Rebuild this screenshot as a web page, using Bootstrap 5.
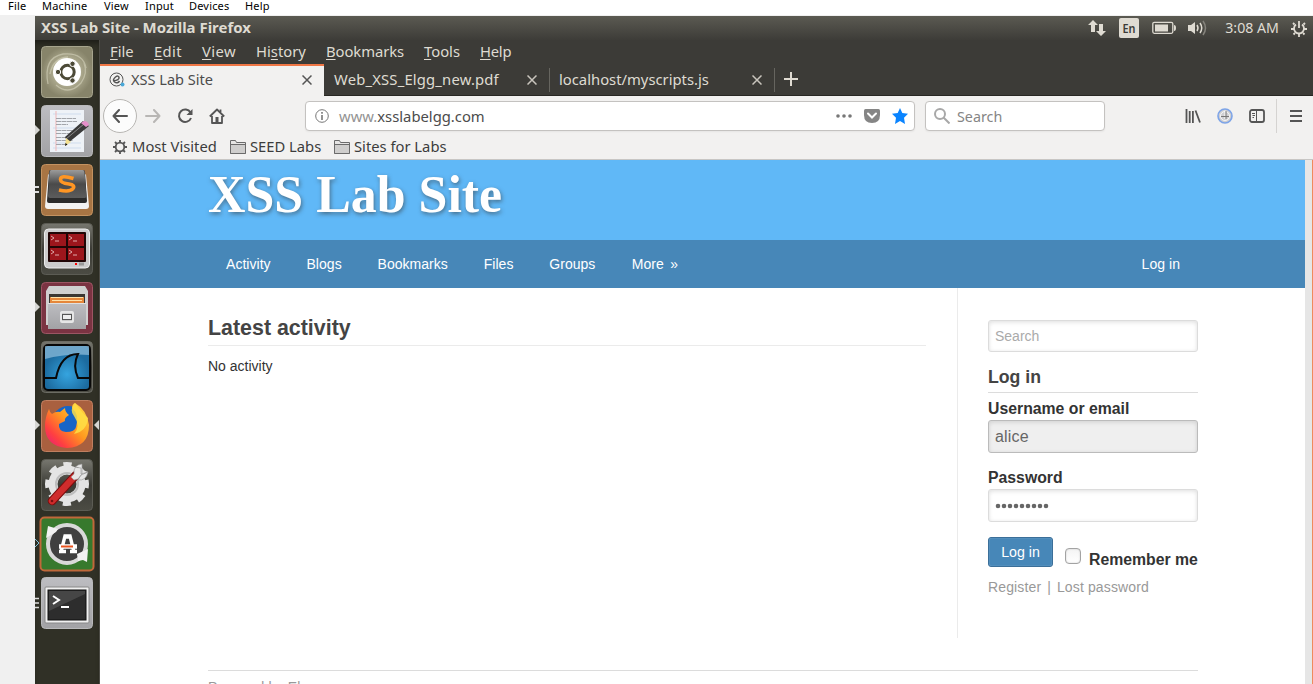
<!DOCTYPE html>
<html lang="en">
<head>
<meta charset="utf-8">
<title>XSS Lab Site</title>
<meta name="viewport" content="width=device-width, initial-scale=1">
<link href="https://cdn.jsdelivr.net/npm/bootstrap@5.3.0/dist/css/bootstrap.min.css" rel="stylesheet">
<style>
  body { width: 1313px; height: 684px; overflow: hidden; background: #fff; font-family: "Liberation Sans", Arial, sans-serif; font-size: 14px; color: #333; }
  svg { display: block; flex: none; }
  .hostbar { height: 15px; padding-left: 8px; font: 11px/12px "Noto Sans", sans-serif; color: #000; white-space: pre; letter-spacing: .18px; }
  .hostbar span { display: block; flex: none; }
  .gutter { width: 35px; background: #f0f0f0; flex: none; }
  .desk { height: 669px; border-top: 1px solid #f0f0f0; }
  .ubu { font-family: "Noto Sans", "Open Sans", sans-serif; white-space: nowrap; }
  .panel { height: 24px; background: linear-gradient(#5b5a52, #3d3c38); color: #dfdbd2; padding: 0 6px 0 6px; }
  .wtitle { font-size: 14.95px; line-height: 20px; padding-bottom: 2px; }
  .clock { font-size: 14.2px; margin-left: 17px; padding-bottom: 1px; }
  .launcher { width: 65px; background: #303026; border-right: 1px solid #4c4b45; padding: 6px 6px 0; gap: 7px; flex: none; box-shadow: inset 0 5px 5px -2px #1e1e18; }
  .tile { width: 52px; height: 52px; position: relative; flex: none; }
  .tile > .mk { position: absolute; left: -6px; top: 20px; }
  .tile > .mkr { position: absolute; left: 53px; top: 20px; }
  .menus { height: 24px; background: #3c3b37; color: #dfdbd2; padding: 0 10px; gap: 20px; font-size: 14.8px; line-height: 22px; }
  .menus span { flex: none; }
  .menus span:nth-child(1) { width: 24px; }
  .menus span:nth-child(2) { width: 28px; letter-spacing: .35px; }
  .menus span:nth-child(3) { width: 34px; letter-spacing: .4px; }
  .menus span:nth-child(4) { width: 50px; }
  .menus span:nth-child(5) { width: 78px; letter-spacing: -.06px; }
  .menus span:nth-child(6) { width: 36px; }
  .menus span:nth-child(7) { width: 31px; letter-spacing: -.25px; }
  .menus u { text-underline-offset: 2px; }
  .tabs { height: 32px; background: #3c3b37; color: #dfdbd2; font-size: 14.8px; line-height: 20px; border-bottom: 1px solid #282723; }
  .tabs .on { width: 224px; height: 32px; background: #f2f1f0; border-top: 2px solid #f07746; color: #4c4c4c; padding: 0 12px 0 9px; flex: none; font-size: 14.55px; }
  .tabs .on > * { margin-top: -3px; }
  .tabs .on > span { margin-top: -5px; }
  .tabs .off { width: 225px; height: 31px; padding: 0 12px 0 10px; flex: none; }
  .tabs .off > span { margin-top: -2px; }
  .tabs .sep { width: 1px; height: 24px; background: #66655f; flex: none; margin-left: -1px; }
  .tabs .sep + .off { margin-right: 1px; }
  .pdf { letter-spacing: .18px; }
  .tools { height: 40px; background: #f2f1f0; padding-left: 3px; color: #4c4c4c; }
  .back { width: 34px; height: 34px; border: 1px solid #b8b6b3; border-radius: 50%; background: #fcfcfc; flex: none; }
  .field { height: 30px; background: #fff; border: 1px solid #c4c2c0; border-radius: 4px; box-shadow: 0 1px 2px #0000000d; flex: none; font-size: 14.8px; }
  .marks { height: 23px; background: #f2f1f0; color: #3c3c3c; font-size: 14.75px; line-height: 20px; padding: 0 0 2px 12px; }
  .marks > span { margin-top: -2px; }
  .view { height: 525px; overflow: hidden; border-top: 1px solid #c8c6c4; background: #fff; }
  .page { width: 1205px; }
  .track { width: 7px; background: #e6e6e6; flex: none; }
  .edge { width: 1px; background: #f08a5d; flex: none; }
  .banner { height: 80px; background: #60b8f7; padding-left: 108px; }
  .banner h1 { font: bold 51.9px/70px "Liberation Serif", serif; color: #fff; text-shadow: 1px 2px 4px #33333390; margin: 0; white-space: nowrap; }
  .menubar { height: 48px; background: #4787b8; color: #fff; padding: 0 125px 0 126px; gap: 35.8px; line-height: 48px; white-space: nowrap; letter-spacing: .04px; }
  .wrap { width: 990px; margin-left: 108px; height: 350px; }
  .mainc { width: 750px; border-right: 1px solid #ebebeb; padding: 25px 31px 0 0; height: 350px; }
  .mainc .box { border-bottom: 1px solid #ebebeb; height: 33px; padding-top: 1px; }
  .mainc h2 { font-size: 21.4px; line-height: 28px; font-weight: 700; color: #444; margin: 0; }
  .side { width: 240px; padding: 32px 0 0 30px; white-space: nowrap; }
  .inp { border: 1px solid #dcdcdc; border-radius: 3px; box-shadow: inset 0 2px 4px rgba(0,0,0,.08), inset 0 0 4px rgba(0,0,0,.06); padding-left: 6px; width: 210px; }
  .finder { height: 32px; line-height: 30px; color: #aaa; }
  .userbox { margin-top: 2px; height: 33px; line-height: 31px; font-size: 16px; letter-spacing: .2px; color: #666; background: #efefef; border-color: #bbb; }
  .side h3 { font-size: 17.7px; line-height: 22px; font-weight: 700; color: #444; margin: 14px 0 0; height: 27px; border-bottom: 1px solid #dcdcdc; }
  .side label { font-weight: 700; font-size: 15.8px; line-height: 20px; height: 19px; display: block; }
  .go { width: 65px; height: 30px; background: #4787b8; border: 1px solid #3b6f99; border-radius: 3px; color: #fff; line-height: 28px; text-align: center; box-shadow: inset 0 0 1px #ffffffa0; padding: 0; font-size: 14.2px; flex: none; }
  .ck { width: 16px; height: 16px; border: 1px solid #a3a3a3; border-radius: 4px; background: linear-gradient(#f4f4f4, #fff); flex: none; box-shadow: inset 0 0 2px #0003; margin: 11px 0 0 12px; }
  .links { margin-top: 10px; color: #999; letter-spacing: .13px; }
  .foot { width: 990px; margin: 32px 0 0 108px; border-top: 1px solid #dcdcdc; color: #999; padding-top: 7px; line-height: 18px; letter-spacing: .18px; }
</style>
<script src="https://cdn.jsdelivr.net/npm/bootstrap@5.3.0/dist/js/bootstrap.bundle.min.js"></script>
</head>
<body>
<div class="hostbar d-flex"><span style="width:34px">File</span><span style="width:62px">Machine</span><span style="width:41px">View</span><span style="width:44px">Input</span><span style="width:56px">Devices</span><span>Help</span></div>
<div class="desk d-flex">
  <div class="gutter"></div>
  <div class="flex-grow-1">
    <header class="panel ubu d-flex align-items-center">
      <strong class="wtitle me-auto">XSS Lab Site - Mozilla Firefox</strong>
      <svg width="18" height="18" viewBox="0 0 18 18" fill="#dfdbd2"><path d="M0 6 5 1l5 5H7v7H3V6zM8 12h3V5h4v7h3l-5 5z"/></svg>
      <svg style="margin-left:13px" width="20" height="20"><rect width="20" height="20" rx="2" fill="#dfdbd2"/><text x="3.500" y="14.500" font-size="12" font-weight="600" fill="#3c3b37" textLength="13" lengthAdjust="spacingAndGlyphs">En</text></svg>
      <svg style="margin-left:13px" width="24" height="14"><rect x=".8" y="1.300" width="20" height="11" rx="1.500" fill="none" stroke="#dfdbd2" stroke-width="1.300"/><rect x="3" y="3.500" width="13" height="7" fill="#dfdbd2"/><path d="M22 4q2 0 2 3t-2 3z" fill="#dfdbd2"/></svg>
      <svg style="margin-left:11px" width="21" height="18" fill="none" stroke="#dfdbd2" stroke-width="1.500"><path d="M1 6h3l4-3v12l-4-3H1z" fill="#dfdbd2" stroke="none"/><path d="M10 6q2 3 0 6M13 4q3.500 5 0 10"/><path d="M16 2q5 7 0 14" stroke="#85837c"/></svg>
      <span class="clock">3:08 AM</span>
      <svg style="margin-left:12px" width="16" height="17" viewBox="0 0 16 17" fill="none" stroke="#dfdbd2"><path d="M5 4.500a5 5 0 1 0 6 0M8 1v7" stroke-width="1.800"/><path d="M0 9h3M13 9h3M2 3l1.500 1.500M14 3l-1.500 1.500M2.500 14.500 4 13M13.500 14.500 12 13M8 14v3" stroke-width="1.800"/></svg>
    </header>
    <div class="d-flex" style="height:644px">
      <nav class="launcher d-flex flex-column">
        <div class="tile"><svg width="52" height="52"><defs><radialGradient id="a1"><stop offset="0" stop-color="#d8d5b8"/><stop offset="1" stop-color="#87846a"/></radialGradient><linearGradient id="gr" x2="0" y2="1"><stop offset="0" stop-color="#c9c9cc"/><stop offset="1" stop-color="#8e8e90"/></linearGradient><linearGradient id="pl" x2="0" y2="1"><stop offset="0" stop-color="#bdbdc1"/><stop offset="1" stop-color="#a2a2a5"/></linearGradient><linearGradient id="dk" x2="0" y2="1"><stop offset="0" stop-color="#77776f"/><stop offset=".5" stop-color="#3b3b35"/><stop offset="1" stop-color="#4c4c44"/></linearGradient></defs><rect x=".5" y=".5" width="51" height="51" rx="4" fill="url(#a1)" stroke="#a6a48d"/><path d="M7 38Q2 12 22 8q20-2 23 14M15 39Q28 50 40 37q7-10 3-20M9 28Q12 12 27 11" fill="none" stroke="#d6d4bd" stroke-width="1.300" opacity=".6"/><circle cx="26" cy="26" r="14" fill="#fff"/><circle cx="26.500" cy="26" r="6.700" fill="none" stroke="#4c4a37" stroke-width="3"/><g fill="#4c4a37" stroke="#fff"><circle cx="17" cy="26" r="2.700"/><circle cx="31.500" cy="17.800" r="2.700"/><circle cx="31.500" cy="34.500" r="2.700"/></g></svg></div>
        <div class="tile"><svg class="mk" width="6" height="10"><path d="M0 0 5 5 0 10z" fill="#d5d5d2"/></svg><svg width="52" height="52"><rect x=".5" y=".5" width="51" height="51" rx="4" fill="url(#pl)" stroke="#b9b9bb"/><path d="M9 5h34v42H9z" fill="#eef2f7"/><path d="M12 9h28M12 23h28M12 43h28M12 38h28" stroke="#cfdced"/><path d="M15 6v40" stroke="#f0b5b5"/><path d="M15 13.500h20M15 16.500h21M15 19.500h12M15 25.500h21M15 28.500h20M15 32.500h17M15 35.500h17M15 39.500h9" stroke="#a2a5aa" stroke-dasharray="5 .5"/><path d="m42 16 6 5-21 17-3-6z" fill="#3a3a3a"/><path d="m43 19-18 15" stroke="#888"/><path d="m24 41 1-8 5 4z" fill="#f3e08f"/><path d="m24 41 .500-3 2 1.500z" fill="#111"/><path d="m40 18 3-2q4 0 5 4l-3 2z" fill="#e48fc9"/></svg></div>
        <div class="tile"><svg class="mk" width="6" height="10"><path d="M0 3h4M0 8h4" stroke="#ddd" stroke-width="2"/></svg><svg width="52" height="52"><defs><linearGradient id="key" x2="0" y2="1"><stop offset="0" stop-color="#9b9b9b"/><stop offset=".5" stop-color="#4a4a4a"/><stop offset="1" stop-color="#5c5c5c"/></linearGradient></defs><rect x=".5" y=".5" width="51" height="51" rx="4" fill="#a87544" stroke="#c49260"/><path d="M7 11q1-2 3-2h32q2 0 3 2l3 31q0 3-3 3H7q-3 0-3-3z" fill="#f2f2f2"/><path d="M8 8q0-2 2-2h32q2 0 2 2l2 29q0 2-2 2H8q-2 0-2-2z" fill="#2b2b2b"/><path d="M8.500 8q0-2 2-2h31q2 0 2 2l2 24q0 2-2 2H9q-2 0-2-2z" fill="url(#key)"/><path d="M32.500 14.500q-13-4-13 1 0 3.500 8.500 4.500 6.500 1 4 4.500-3 4-14 1.500" fill="none" stroke="#ff9624" stroke-width="3.600"/></svg></div>
        <div class="tile"><svg width="52" height="52"><rect x=".5" y=".5" width="51" height="51" rx="4" fill="url(#dk)" stroke="#5c5c54"/><rect x="3.500" y="6" width="45" height="39" rx="4" fill="#ccc" stroke="#eee"/><rect x="7" y="9" width="38" height="30" rx="1" fill="#210606"/><path d="M9 11h16v12H9zM27 11h16v12H27zM9 25h16v12H9zM27 25h16v12H27z" fill="#9c161c"/><path d="m10 13 3 2-3 2M28 13l3 2-3 2M10 27l3 2-3 2M28 27l3 2-3 2M14 18h4M32 18h4M14 32h4M32 32h4" fill="none" stroke="#dfaaaa"/><path d="M34 41h2" stroke="red" stroke-width="2"/><path d="M38 41h5" stroke="#999" stroke-width="3"/></svg></div>
        <div class="tile"><svg class="mk" width="6" height="10"><path d="M0 0 5 5 0 10z" fill="#d5d5d2"/></svg><svg width="52" height="52"><rect x=".5" y=".5" width="51" height="51" rx="4" fill="#7b3342" stroke="#9c5563"/><path d="M8 4h36l3 5v34H5V9z" fill="#d0d0d0"/><path d="M8 12h36v10H8z" fill="#3b3733"/><path d="M9 15h34v7H9z" fill="#e5873b"/><path d="M10 15.500h32M11 18.500h30" stroke="#ffe1a8"/><path d="M7 21h38v26H7z" fill="url(#pl)"/><path d="M7 21.500h38" stroke="#e0e0e0"/><rect x="20" y="30" width="12" height="10" rx="1" fill="#ccc" stroke="#e6e6e6" stroke-width="2"/><rect x="21.500" y="32.500" width="9" height="5" fill="#eee" stroke="#555"/></svg></div>
        <div class="tile"><svg width="52" height="52"><defs><radialGradient id="sh" cy=".65"><stop offset="0" stop-color="#35a4df"/><stop offset="1" stop-color="#1c6b9f"/></radialGradient></defs><rect x=".5" y=".5" width="51" height="51" rx="4" fill="url(#dk)" stroke="#6c6c64"/><rect x="3" y="4" width="46" height="45" rx="4" fill="url(#sh)" stroke="#080808" stroke-width="2"/><path d="M4 5h44v9q-22-2-44 4z" fill="#bfe2f5" opacity=".5"/><path d="M3 37h12c3-15 10-24 22-24-4 8-4 15 0 24h12" fill="none" stroke="#080808" stroke-width="2"/></svg></div>
        <div class="tile"><svg class="mk" width="6" height="10"><path d="M0 0 5 5 0 10z" fill="#d5d5d2"/></svg><svg class="mkr" width="5" height="10"><path d="M5 0 0 5l5 5z" fill="#d5d5d2"/></svg><svg width="52" height="52"><defs><linearGradient id="ff" x1="1" x2="0" y1="0" y2="1"><stop offset="0" stop-color="#ffe34a"/><stop offset=".45" stop-color="#ff9a1f"/><stop offset=".75" stop-color="#ff4040"/><stop offset="1" stop-color="#e31587"/></linearGradient></defs><rect x=".5" y=".5" width="51" height="51" rx="4" fill="#a9603f" stroke="#c07f60"/><circle cx="27" cy="22" r="16" fill="#1765c6"/><path d="M8 9q1 4 3 5 4-3 8-2l5-4q0 4 4 7-5 3-4 6l-6 3q-1 7 7 8 9 0 10-5 4-12-4-19 0-4 3-5 12 7 14 22 0 22-22 23Q4 46 4 26 4 17 8 9z" fill="url(#ff)"/><path d="M34 3q-6 7-1 13 7 10 0 18 13-3 14-16Q42 14 34 3z" fill="#ffdf45" opacity=".85"/></svg></div>
        <div class="tile"><svg width="52" height="52"><rect x=".5" y=".5" width="51" height="51" rx="4" fill="url(#dk)" stroke="#5c5c54"/><circle cx="26" cy="25" r="14" fill="none" stroke="#e4e4e4" stroke-width="9"/><circle cx="26" cy="25" r="19.500" fill="none" stroke="#e4e4e4" stroke-width="5" stroke-dasharray="8 7.315" transform="rotate(-12 26 25)"/><circle cx="26" cy="25" r="11" fill="none" stroke="#bdbdbd" stroke-width="2"/><path d="M11 42 35 16" stroke="#7a0c0c" stroke-width="8.500" stroke-linecap="round"/><path d="M11 42 33 18" stroke="#cf2c2c" stroke-width="6.500" stroke-linecap="round"/><path d="m33 21 4-1 4-5V5q-9 1-8 10l-3 3zM37 21q8 1 10-8l-7 3zM34 8l6 1v6l7-2" fill="#e6e6e6" stroke="#999" stroke-width=".6"/><circle cx="11" cy="42" r="1.300" fill="#711"/></svg></div>
        <div class="tile"><svg class="mk" width="6" height="10"><path d="M0 1 4 5 0 9" fill="none" stroke="#7fbfd6"/></svg><svg width="52" height="52" overflow="visible"><rect x="-.5" y="-.5" width="53" height="53" rx="4" fill="#37792d" stroke="#c0683a" stroke-width="2"/><circle cx="26" cy="26" r="19" fill="#404040" stroke="#d9d9d9" stroke-width="4"/><path d="m5 20 2-12 10 3-2 3zM36 36l11-5-1 13-4-2-5 1z" fill="#f2f2f2"/><path d="M20 34l4-16h5l4 16M25 33.500h-7M36 33.500h-7M23 19h7" fill="none" stroke="#fff" stroke-width="3.400"/><path d="M18 28.500h18" stroke="#fff" stroke-width="4.500"/><path d="M20 28.500h12" stroke="#e95420" stroke-width="2"/></svg></div>
        <div class="tile"><svg class="mk" width="6" height="12"><path d="M0 1.500h4M0 6h4M0 10.500h4" stroke="#ddd" stroke-width="1.700"/></svg><svg width="52" height="52"><rect x=".5" y=".5" width="51" height="51" rx="4" fill="url(#pl)" stroke="#b9b9bb"/><rect x="4" y="10" width="44" height="36" rx="1" fill="#f0f0f0" stroke="#888"/><rect x="7" y="13" width="38" height="30" fill="#2d2d2d" stroke="#111"/><path d="M8 14h36v3L8 34z" fill="#fff" opacity=".12"/><path d="m12 19 6 4-6 4" fill="none" stroke="#fff" stroke-width="2"/><path d="M20 30h8" stroke="#fff" stroke-width="2"/></svg></div>
      </nav>
      <main style="width:1213px">
        <div class="menus ubu d-flex"><span><u>F</u>ile</span><span><u>E</u>dit</span><span><u>V</u>iew</span><span>Hi<u>s</u>tory</span><span><u>B</u>ookmarks</span><span><u>T</u>ools</span><span><u>H</u>elp</span></div>
        <div class="tabs ubu d-flex align-items-start">
          <div class="on d-flex align-items-center">
            <svg width="16" height="16" fill="none" stroke="#555"><circle cx="7.500" cy="7.500" r="6.500"/><path d="M4.500 9q6-1 5.500-3.500T6.500 5Q3 8 5.500 10q3 2 5-1" stroke-width="1.500"/><circle cx="13.500" cy="12.500" r="2" fill="#4aa8d8" stroke="none"/></svg>
            <span style="margin-left:6px">XSS Lab Site</span>
            <svg class="ms-auto" width="10" height="10"><path d="m.5.500 9 9m0-9-9 9" stroke="#555" stroke-width="1.500"/></svg>
          </div>
          <div class="off d-flex align-items-center"><span class="pdf">Web_XSS_Elgg_new.pdf</span><svg class="ms-auto" width="10" height="10"><path d="m.5.500 9 9m0-9-9 9" stroke="#c9c5bd" stroke-width="1.500"/></svg></div>
          <i class="sep mt-1 ms-0"></i>
          <div class="off d-flex align-items-center" style="margin-left:-1px"><span>localhost/myscripts.js</span><svg class="ms-auto" width="10" height="10"><path d="m.5.500 9 9m0-9-9 9" stroke="#c9c5bd" stroke-width="1.500"/></svg></div>
          <i class="sep mt-1"></i>
          <svg style="margin:8px 0 0 9px" width="14" height="14"><path d="M7 0v14M0 7h14" stroke="#dfdbd2" stroke-width="2"/></svg>
        </div>
        <div class="tools ubu d-flex align-items-center">
          <div class="back d-flex align-items-center justify-content-center"><svg width="16" height="14" fill="none" stroke="#555" stroke-width="2" stroke-linecap="round" stroke-linejoin="round"><path d="M15 7H1.500M7 1 1.500 7 7 13"/></svg></div>
          <svg style="margin-left:8px" width="16" height="14" fill="none" stroke="#b8b6b4" stroke-width="2" stroke-linecap="round" stroke-linejoin="round"><path d="M1 7h13.500M9 1l5.500 6L9 13"/></svg>
          <svg style="margin-left:16px" width="16" height="16" fill="none" stroke="#555" stroke-width="2"><path d="M13.500 4.500A6.200 6.200 0 1 0 14 10"/><path d="M15.500 1v6h-6z" fill="#555" stroke="none"/></svg>
          <svg style="margin-left:16px" width="16" height="16" fill="none" stroke="#555" stroke-width="1.800"><path d="M.8 8.500 8 1.500l7.200 7M3 8v7h10V8" stroke-linejoin="round"/><path d="M6.500 9h3v6h-3z" fill="#555" stroke="none"/><path d="M11.500 1.500V4"/></svg>
          <div class="field d-flex align-items-center" style="width:610px;margin-left:80px;padding:0 6px 0 9px">
            <svg width="14" height="14" fill="none" stroke="#777"><circle cx="7" cy="7" r="6.300"/><path d="M7 6v5M7 3v1.800" stroke-width="1.600"/></svg>
            <span class="me-auto" style="margin-left:10px"><span style="color:#939393">www.</span>xsslabelgg.com</span>
            <svg width="16" height="4" fill="#777"><circle cx="2" cy="2" r="1.800"/><circle cx="8" cy="2" r="1.800"/><circle cx="14" cy="2" r="1.800"/></svg>
            <svg style="margin-left:12px" width="16" height="14"><path d="M1.500 0h13Q16 0 16 1.500V6q0 8-8 8T0 6V1.500Q0 0 1.500 0z" fill="#858585"/><path d="m4 4.500 4 4 4-4" fill="none" stroke="#fff" stroke-width="2" stroke-linecap="round"/></svg>
            <svg style="margin-left:12px" width="16" height="16"><path d="m8 0 2.300 5 5.700.7-4 4 1 6.300-5-3-5 3 1-6.300-4-4L5.700 5z" fill="#0a84ff"/></svg>
          </div>
          <div class="field d-flex align-items-center" style="width:180px;margin-left:10px;padding-left:8px;color:#858585">
            <svg width="16" height="16" fill="none" stroke="#a8a8a8" stroke-width="2"><circle cx="6" cy="6" r="5"/><path d="m9.500 9.500 6 6"/></svg>
            <span style="margin:1px 0 0 7px;font-size:14.3px">Search</span>
          </div>
          <svg style="margin-left:80px" width="16" height="14" stroke="#555" stroke-width="1.800"><path d="M1.500 0v14M4.700 2v12M7.900 2v12M10.500 1.500l4.500 12"/></svg>
          <svg style="margin-left:16px" width="16" height="16"><circle cx="8" cy="8" r="7" fill="#cfcfd2" stroke="#7da4e8" stroke-width="1.600"/><circle cx="8" cy="8" r="4.500" fill="none" stroke="#fff" stroke-width=".8"/><path d="M8 2.500v8.500" stroke="#fff"/><path d="M9 3v8M4 8.500h8" stroke="#777"/></svg>
          <svg style="margin-left:16px" width="16" height="14" fill="none" stroke="#555"><rect x="1" y="1" width="14" height="12" rx="2" stroke-width="1.800"/><path d="M7.500 1v12M3 4.500h3M3.500 6.500H6M3.500 8.500H5"/></svg>
          <i style="width:1px;height:34px;background:#d5d3d1;margin-left:11px"></i>
          <svg style="margin-left:13px" width="12" height="12" stroke="#555" stroke-width="2"><path d="M0 1h12M0 6h12M0 11h12"/></svg>
        </div>
        <div class="marks ubu d-flex align-items-center">
          <svg width="16" height="16" fill="none" stroke="#555" stroke-width="1.800"><circle cx="8" cy="8" r="4.300"/><path d="M8 1v2.500M8 12.500V15M1 8h2.500M12.500 8H15M3 3l2 2M11 11l2 2M3 13l2-2M11 5l2-2"/></svg>
          <span style="margin-left:4px;width:98px">Most Visited</span>
          <svg width="16" height="14"><path d="M.5 13.500V.5h5l1 2h9v11z" fill="#e6e5e4" stroke="#6b6b6b"/><path d="M1 4.500h14v9H1z" fill="#cfcecd"/><path d="M.5 4.500h15M.5 13.500h15" stroke="#6b6b6b"/></svg>
          <span style="margin-left:4px;width:84px">SEED Labs</span>
          <svg width="16" height="14"><path d="M.5 13.500V.5h5l1 2h9v11z" fill="#e6e5e4" stroke="#6b6b6b"/><path d="M1 4.500h14v9H1z" fill="#cfcecd"/><path d="M.5 4.500h15M.5 13.500h15" stroke="#6b6b6b"/></svg>
          <span style="margin-left:4px">Sites for Labs</span>
        </div>
        <div class="view d-flex">
          <div class="page">
            <div class="banner"><h1>XSS Lab Site</h1></div>
            <div class="menubar d-flex"><span>Activity</span><span>Blogs</span><span>Bookmarks</span><span>Files</span><span>Groups</span><span style="margin-left:.5px;word-spacing:2.500px">More »</span><span class="ms-auto">Log in</span></div>
            <div class="wrap d-flex">
              <section class="mainc">
                <div class="box"><h2>Latest activity</h2></div>
                <p class="mb-0" style="margin-top:10px">No activity</p>
              </section>
              <aside class="side">
                <div class="inp finder">Search</div>
                <h3>Log in</h3>
                <label style="margin-top:6px">Username or email</label>
                <div class="inp userbox">alice</div>
                <label style="margin-top:15px">Password</label>
                <div class="inp d-flex align-items-center" style="margin-top:2px;height:33px"><svg width="56" height="6"><path d="M3 3h49" stroke="#666" stroke-width="4.600" stroke-linecap="round" stroke-dasharray="0 6"/></svg></div>
                <div class="d-flex align-items-start" style="margin-top:15px;height:30px"><button class="go btn">Log in</button><i class="ck"></i><label style="margin:13px 0 0 8px">Remember me</label></div>
                <div class="links">Register<span style="margin:0 6px">|</span>Lost password</div>
              </aside>
            </div>
            <footer class="foot">Powered by Elgg</footer>
          </div>
          <div class="track"></div><div class="edge"></div>
        </div>
      </main>
    </div>
  </div>
</div>
</body>
</html>
